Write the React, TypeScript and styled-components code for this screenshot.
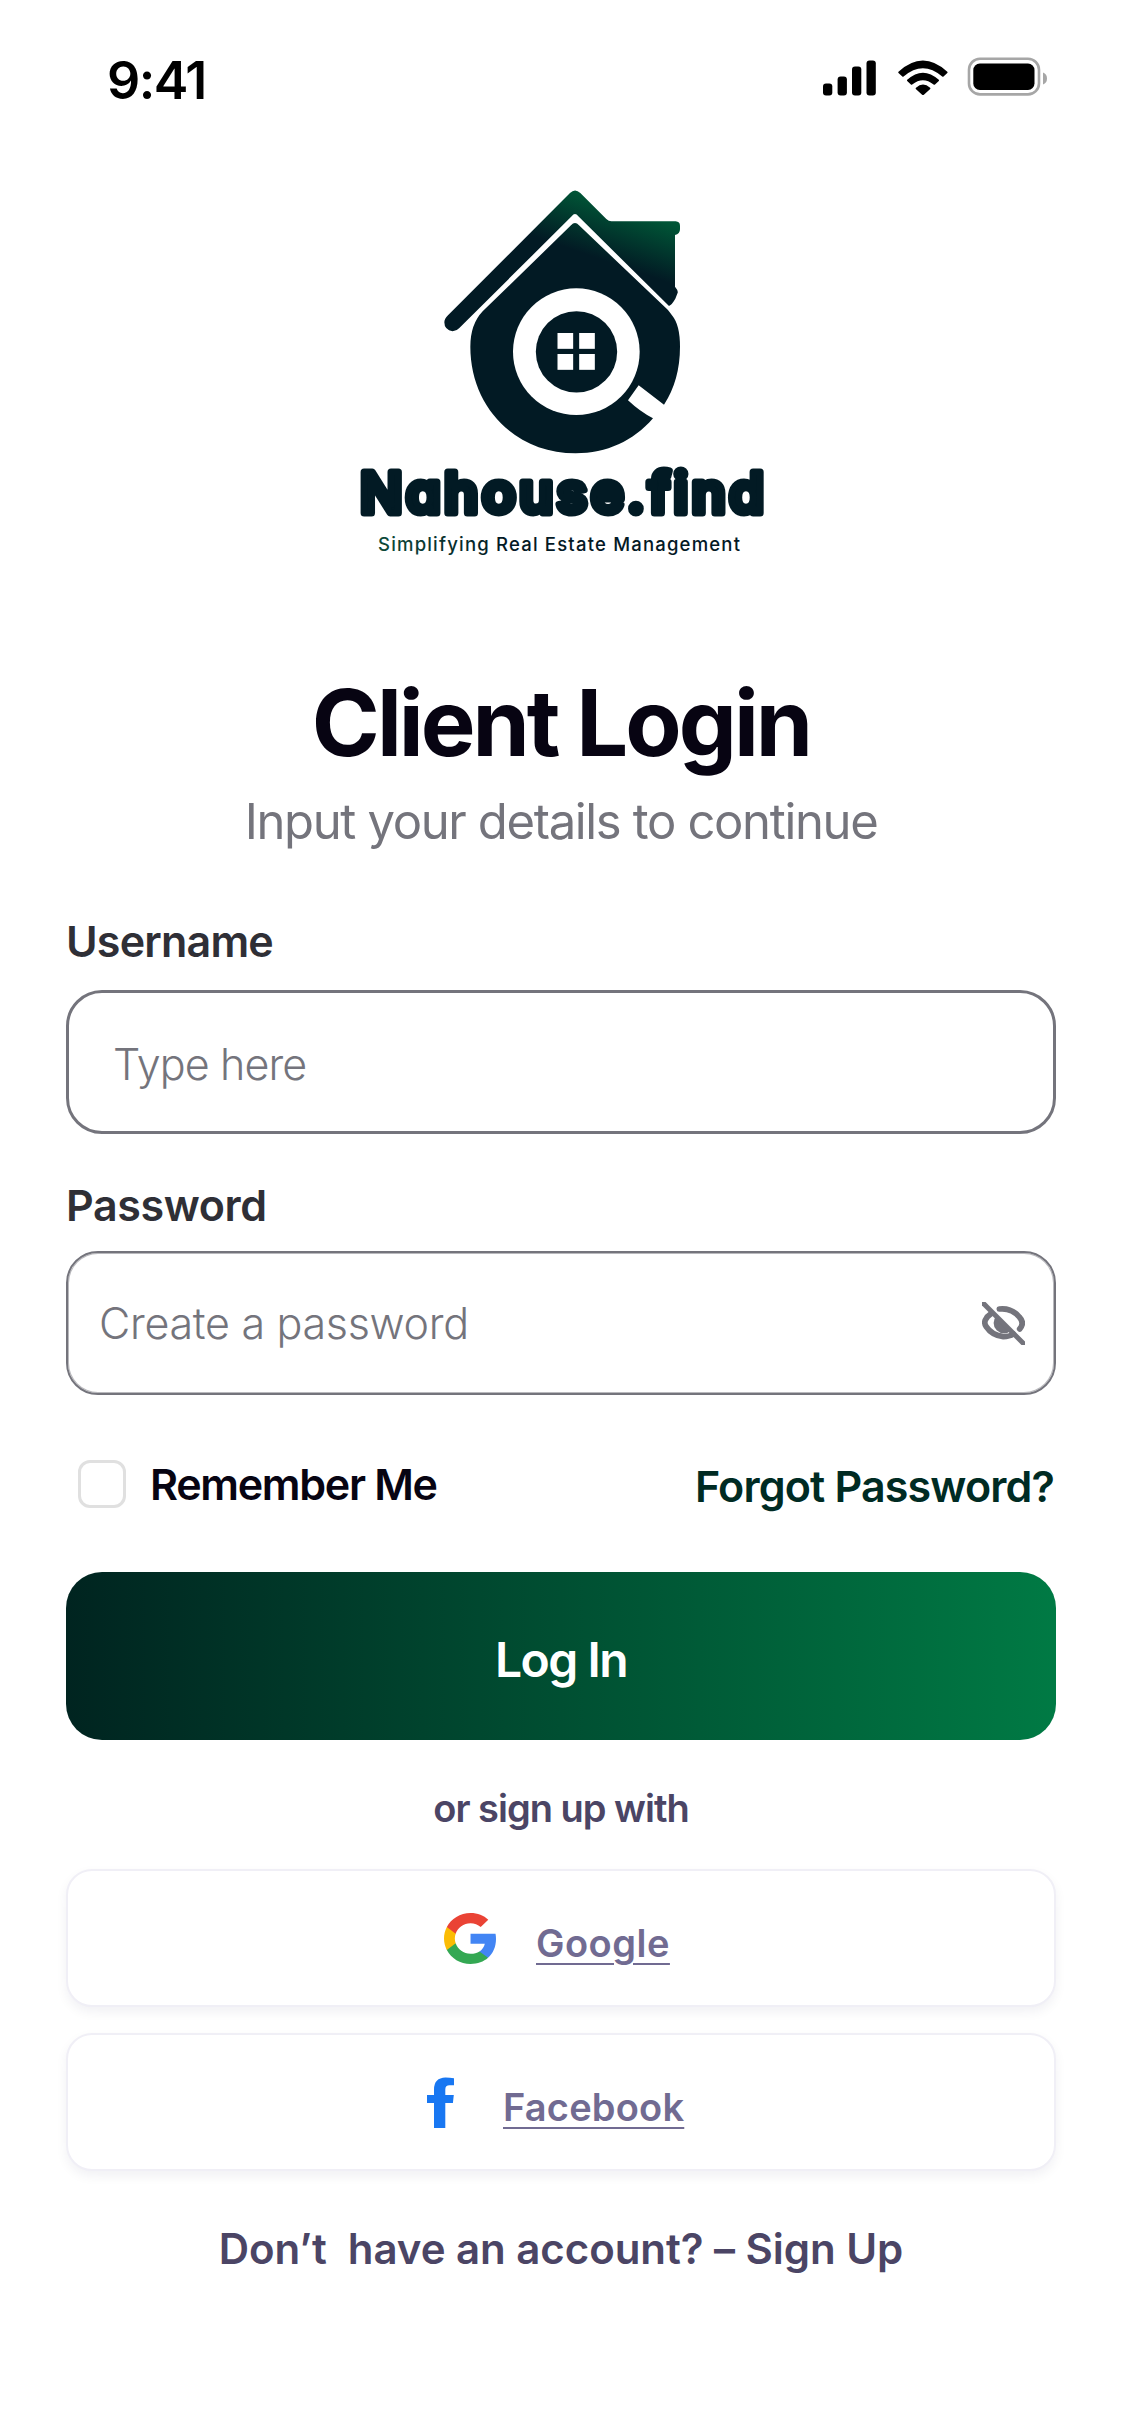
import React from "react";
import styled, { createGlobalStyle } from "styled-components";

const GlobalStyle = createGlobalStyle`
  * { box-sizing: border-box; }
  body { margin: 0; background: #fff; }
`;

const font = `Inter, "Liberation Sans", sans-serif`;

const Page = styled.main`
  width: 1125px;
  height: 2436px;
  padding: 0 69px 0 66px;
  background: #fff;
  font-family: ${font};
  display: flex;
  flex-direction: column;
  overflow: hidden;
`;

const StatusBar = styled.header`
  height: 161px;
  padding: 0 8px 0 41px;
  display: flex;
  align-items: center;
  justify-content: space-between;
  flex: none;
`;

const Clock = styled.time`
  font-size: 52px;
  font-weight: 600;
  letter-spacing: -1.5px;
  line-height: 60px;
  color: #000;
`;

const StatusIcons = styled.svg`
  width: 226px;
  height: 40px;
  margin-bottom: 8px;
`;

const Logo = styled.svg`
  width: 450px;
  height: 390px;
  margin: 19px 0 0 274px;
  flex: none;
  font-family: ${font};
`;

const Wordmark = styled.text`
  font-size: 56px;
  font-weight: 600;
  font-feature-settings: "cv11";
  fill: #021a24;
  stroke: #021a24;
  stroke-width: 7px;
  stroke-linejoin: round;
`;

const Tagline = styled.text`
  font-size: 18.5px;
  font-weight: 500;
`;

const Title = styled.h1`
  margin: 102px 0 0;
  width: 990px;
  font-size: 92px;
  font-weight: 700;
  line-height: 101px;
  letter-spacing: -3px;
  text-align: center;
  color: #070412;
`;

const Subtitle = styled.p`
  margin: 19px 0 0;
  width: 990px;
  font-size: 49px;
  font-weight: 400;
  line-height: 60px;
  letter-spacing: -1.35px;
  text-align: center;
  color: #74747c;
`;

const Form = styled.form`
  width: 990px;
  display: flex;
  flex-direction: column;
`;

const Label = styled.label<{ $top: number; $spacing: number }>`
  margin-top: ${(p) => p.$top}px;
  font-size: 43px;
  font-weight: 600;
  line-height: 51px;
  letter-spacing: ${(p) => p.$spacing}px;
  color: #2f2f36;
`;

const Field = styled.div<{ $top: number; $indent: number; $thin?: boolean }>`
  height: 144px;
  margin-top: ${(p) => p.$top}px;
  padding: 0 29px 0 ${(p) => p.$indent}px;
  border: ${(p) => (p.$thin ? 2 : 3)}px solid #74747c;
  border-radius: ${(p) => (p.$thin ? 32 : 36)}px;
  box-shadow: ${(p) => (p.$thin ? "inset 0 0 0 1px rgba(116, 116, 124, 0.5)" : "none")};
  display: flex;
  align-items: center;
`;

const Input = styled.input<{ $spacing: number; $drop?: number }>`
  flex: 1;
  min-width: 0;
  height: 70px;
  padding: ${(p) => p.$drop ?? 0}px 0 0;
  border: 0;
  outline: 0;
  background: transparent;
  font-family: ${font};
  font-size: 43px;
  font-weight: 350;
  letter-spacing: ${(p) => p.$spacing}px;
  color: #74747c;
  &::placeholder { color: #74747c; opacity: 1; }
`;

const EyeIcon = styled.svg`
  width: 43px;
  height: 43px;
  flex: none;
`;

const Options = styled.div`
  height: 56px;
  margin-top: 61px;
  padding: 0 2px 0 12px;
  display: flex;
  align-items: center;
  justify-content: space-between;
`;

const Remember = styled.label`
  display: flex;
  align-items: center;
  gap: 24px;
  font-size: 43px;
  font-weight: 600;
  line-height: 56px;
  letter-spacing: -1.3px;
  color: #070412;
`;

const Checkbox = styled.input`
  appearance: none;
  width: 48px;
  height: 48px;
  margin: 0;
  border: 3px solid #e0e0e0;
  border-radius: 12px;
  background: #fff;
`;

const Forgot = styled.a`
  padding-top: 4px;
  font-size: 43px;
  font-weight: 600;
  line-height: 56px;
  letter-spacing: -0.85px;
  color: #002b23;
`;

const LoginButton = styled.button`
  height: 168px;
  margin-top: 60px;
  padding: 7px 0 0;
  border: 0;
  border-radius: 36px;
  background: linear-gradient(90deg, #002420 0%, #007a44 100%);
  font-family: ${font};
  font-size: 48px;
  font-weight: 600;
  letter-spacing: -1.5px;
  color: #fff;
`;

const Divider = styled.p`
  margin: 43px 0 0;
  width: 990px;
  font-size: 38px;
  font-weight: 600;
  line-height: 50px;
  letter-spacing: -1px;
  text-align: center;
  color: #4b4565;
`;

const SocialList = styled.div`
  width: 990px;
  margin-top: 36px;
  display: flex;
  flex-direction: column;
  gap: 26px;
`;

const SocialButton = styled.button<{ $indent: number; $gap: number }>`
  height: 138px;
  padding: 0 0 0 ${(p) => p.$indent}px;
  border: 2px solid #f0eff6;
  border-radius: 26px;
  background: #fff;
  box-shadow: 0 5px 12px rgba(25, 20, 60, 0.06);
  display: flex;
  align-items: center;
  gap: ${(p) => p.$gap}px;
  font-family: ${font};
`;

const SocialName = styled.span<{ $spacing: number }>`
  padding-top: 9px;
  font-size: 38px;
  font-weight: 600;
  line-height: 50px;
  letter-spacing: ${(p) => p.$spacing}px;
  text-decoration: underline;
  text-decoration-thickness: 2px;
  text-underline-offset: 6px;
  color: #716b92;
`;

const SignUp = styled.p`
  margin: 52px 0 0;
  width: 990px;
  font-size: 42px;
  font-weight: 600;
  line-height: 51px;
  letter-spacing: -0.05px;
  text-align: center;
  white-space: pre;
  color: #4b4565;
`;

function Status() {
  return (
    <StatusIcons viewBox="822 56.5 226 40">
      <rect x="823" y="83" width="9.3" height="12" rx="3" />
      <rect x="837.6" y="76" width="9.3" height="19" rx="3" />
      <rect x="852" y="66" width="9.3" height="29" rx="3" />
      <rect x="866.5" y="60" width="9.3" height="35" rx="3" />
      <path d="M898.5 71.2 Q922.9 48.8 947.3 71.2 Q947.8 71.9 947.3 72.5 L943.5 76 Q942.9 76.5 942.2 76 Q922.9 59.5 903.6 76 Q902.9 76.5 902.3 76 L898.5 72.5 Q898 71.9 898.5 71.2 Z" />
      <path d="M907.2 79.3 Q922.9 65 938.8 79.3 Q939.4 79.9 938.8 80.5 L935 84 Q934.3 84.5 933.6 84 Q922.9 75.3 912.2 84 Q911.5 84.5 910.9 84 L907.2 80.5 Q906.6 79.9 907.2 79.3 Z" />
      <path d="M916 87.2 Q923 81 930.1 87.2 Q930.8 87.8 930.2 88.4 L923.9 94.2 Q923 95 922.1 94.2 L915.8 88.4 Q915.3 87.8 916 87.2 Z" />
      <rect x="969" y="58.3" width="70" height="35.6" rx="11" fill="none" stroke="#a6a6a6" strokeWidth="2.6" />
      <rect x="973.3" y="63" width="61.2" height="26.4" rx="6.5" />
      <path d="M1043 72 Q1047 73.5 1047 78 Q1047 82.5 1043 84 Z" fill="#a6a6a6" />
    </StatusIcons>
  );
}

function Brand() {
  return (
    <Logo viewBox="340 180 450 390" role="img" aria-label="Nahouse.find">
      <defs>
        <linearGradient id="roof" gradientUnits="userSpaceOnUse" x1="690" y1="140" x2="635" y2="300">
          <stop offset="0" stopColor="#005536" />
          <stop offset="1" stopColor="#021a24" />
        </linearGradient>
        <linearGradient id="tag" x1="0" x2="1" y1="0" y2="0">
          <stop offset="0" stopColor="#0d4a3a" />
          <stop offset="0.35" stopColor="#021a24" />
        </linearGradient>
      </defs>
      <g transform="translate(420 170) scale(0.33333)">
        <path
          fill="url(#roof)"
          d="M450 69 Q465 54 481 69 L559 147 Q566 154 574 154 L767 154 Q780 155 780 167 V178 Q780 192 765 195 V350 Q775 362 773 368 L766 386 Q756 404 747 408 L475 139 Q465 125 455 139 L118 474 Q109 484 98 484 Q73 480 73 457 Q73 447 84 436 Z"
        />
        <path
          fill="url(#roof)"
          d="M453 166 Q465 152 477 166 L744 420 L757 437 Q780 465 780 530 Q780 630 732 704 L656 646 L624 691 Q660 725 699 745 C640 813 560 850 467 850 C285 850 151 710 151 530 Q151 463 188 424 Z"
        />
        <circle cx="469" cy="545" r="190" fill="#fff" />
        <circle cx="469.5" cy="545.5" r="122" fill="#021a24" />
        <g fill="#fff">
          <rect x="412.5" y="489" width="47" height="47.5" />
          <rect x="477.5" y="489" width="47" height="47.5" />
          <rect x="412.5" y="552" width="47" height="47.5" />
          <rect x="477.5" y="552" width="47" height="47.5" />
        </g>
      </g>
      <Wordmark x="360" y="513" textLength="404">
        Nahouse.find
      </Wordmark>
      <Tagline x="378" y="551" textLength="362" fill="url(#tag)">
        Simplifying Real Estate Management
      </Tagline>
    </Logo>
  );
}

function EyeOff() {
  return (
    <EyeIcon viewBox="36 35 129 129" fill="none" stroke="#74747c" strokeWidth="17" strokeLinecap="round">
      <path d="M88 56 Q125 52 148 80 Q165 98 149 116" />
      <path d="M62 71 Q52 77 46 89 Q42 98 48 108 Q66 135 100 139 Q118 139 130 131" />
      <path d="M80 76 L124 120 A25 25 0 0 1 80 76 Z" fill="#74747c" stroke="none" />
      <path d="M40 39 L161 160" strokeLinecap="square" strokeWidth="15" />
    </EyeIcon>
  );
}

const ProviderIcon = styled.svg`
  flex: none;
  margin-top: 1px;
`;

function GoogleIcon() {
  return (
    <ProviderIcon width="52" height="51" viewBox="1 1 21.56 22" preserveAspectRatio="none">
      <path fill="#4285F4" d="M22.56 12.25c0-.78-.07-1.53-.2-2.25H12v4.26h5.92c-.26 1.37-1.04 2.53-2.21 3.31v2.77h3.57c2.08-1.92 3.28-4.74 3.28-8.09z" />
      <path fill="#34A853" d="M12 23c2.97 0 5.46-.98 7.28-2.66l-3.57-2.77c-.98.66-2.23 1.06-3.71 1.06-2.86 0-5.29-1.93-6.16-4.53H2.18v2.84C3.99 20.53 7.7 23 12 23z" />
      <path fill="#FBBC05" d="M5.84 14.09c-.22-.66-.35-1.36-.35-2.09s.13-1.43.35-2.09V7.07H2.18C1.43 8.55 1 10.22 1 12s.43 3.45 1.18 4.93l2.85-2.22.81-.62z" />
      <path fill="#EA4335" d="M12 5.38c1.62 0 3.06.56 4.21 1.64l3.15-3.15C17.45 2.09 14.97 1 12 1 7.7 1 3.99 3.47 2.18 7.07l3.66 2.84c.87-2.6 3.3-4.53 6.16-4.53z" />
    </ProviderIcon>
  );
}

function FacebookIcon() {
  return (
    <ProviderIcon width="27" height="51" viewBox="0 0 27 51">
      <path fill="#1877F2" d="M7 51V26H0V18H7V12.5Q7 1 18.5 .6Q23 .6 27 1.2V8.3H22.5Q18.3 8.3 18.3 12.5V18H26.8L25.9 26H18.3V51Z" />
    </ProviderIcon>
  );
}

export default function App() {
  return (
    <>
      <GlobalStyle />
      <Page>
        <StatusBar>
          <Clock>9:41</Clock>
          <Status />
        </StatusBar>
        <Brand />
        <Title>Client Login</Title>
        <Subtitle>Input your details to continue</Subtitle>
        <Form>
          <Label htmlFor="username" $top={64} $spacing={-0.8}>Username</Label>
          <Field $top={23} $indent={44}>
            <Input id="username" placeholder="Type here" $spacing={-0.9} $drop={4} />
          </Field>
          <Label htmlFor="password" $top={46} $spacing={-0.4}>Password</Label>
          <Field $top={20} $indent={31} $thin>
            <Input id="password" type="password" placeholder="Create a password" $spacing={-0.3} />
            <EyeOff />
          </Field>
          <Options>
            <Remember>
              <Checkbox type="checkbox" />
              Remember Me
            </Remember>
            <Forgot>Forgot Password?</Forgot>
          </Options>
          <LoginButton type="button">Log In</LoginButton>
        </Form>
        <Divider>or sign up with</Divider>
        <SocialList>
          <SocialButton $indent={376} $gap={40}>
            <GoogleIcon />
            <SocialName $spacing={0.5}>Google</SocialName>
          </SocialButton>
          <SocialButton $indent={359} $gap={49}>
            <FacebookIcon />
            <SocialName $spacing={0.2}>Facebook</SocialName>
          </SocialButton>
        </SocialList>
        <SignUp>Don’t  have an account? – Sign Up</SignUp>
      </Page>
    </>
  );
}
